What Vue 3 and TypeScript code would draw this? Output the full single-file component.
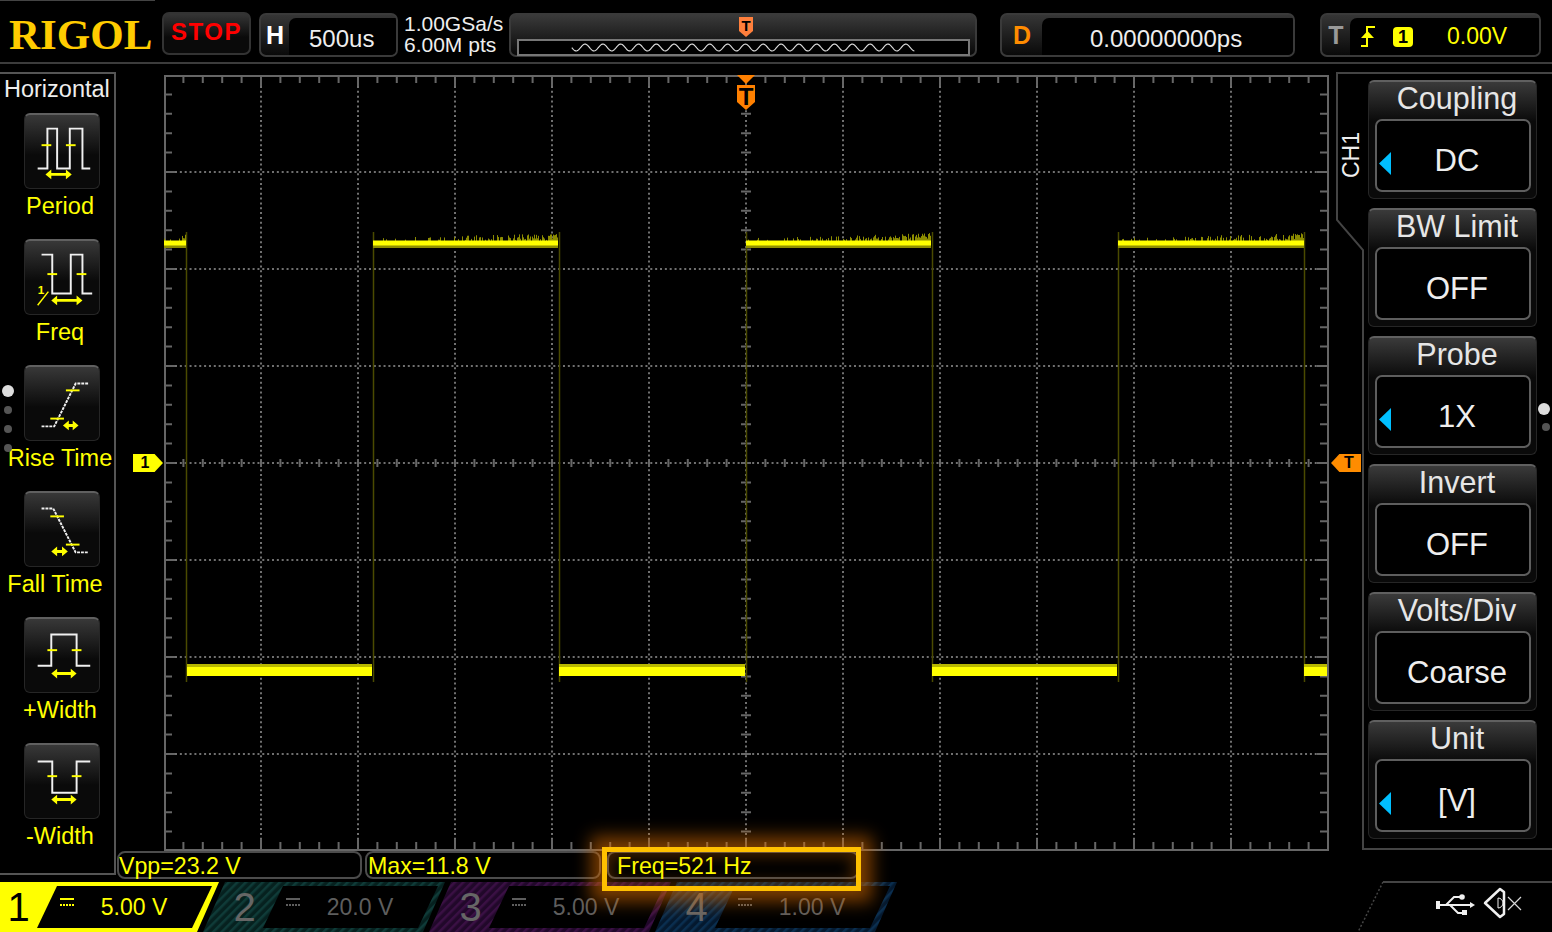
<script setup lang="ts">
interface MeasureIcon {
  label: string
  wave: string
  dotted?: boolean
  ticks: number[][]
  arrow: number[]
  half?: boolean
  shift?: boolean
}
interface SideButton {
  title: string
  value: string
  pointer: boolean
}
interface Channel {
  num: string
  value: string
  edge: string
  hatch: string
  ink: string
}

const icons: MeasureIcon[] = [
  { label: 'Period', wave: 'M13 55H23V14H33V55H46V14H59V55H67', ticks: [[17, 27, 31], [42, 52, 31]], arrow: [21, 48, 61] },
  { label: 'Freq', wave: 'M17 14H28V54H47V14H59V54H69', ticks: [[23, 33, 34], [53, 63, 34]], arrow: [27, 59, 61], half: true },
  { label: 'Rise Time', wave: 'M17 61H30L52 17H65', dotted: true, ticks: [[42, 56, 24], [26, 40, 53]], arrow: [39, 55, 60] },
  { label: 'Fall Time', wave: 'M17 16H29L52 61H65', dotted: true, ticks: [[26, 40, 24], [42, 56, 53]], arrow: [27, 44, 60], shift: true },
  { label: '+Width', wave: 'M13 48H27V16H53V48H67', ticks: [[23, 33, 32], [48, 58, 32]], arrow: [27, 53, 56] },
  { label: '-Width', wave: 'M13 17H28V49H53V17H67', ticks: [[23, 33, 32], [48, 58, 32]], arrow: [27, 53, 56] },
]

const sideButtons: SideButton[] = [
  { title: 'Coupling', value: 'DC', pointer: true },
  { title: 'BW Limit', value: 'OFF', pointer: false },
  { title: 'Probe', value: '1X', pointer: true },
  { title: 'Invert', value: 'OFF', pointer: false },
  { title: 'Volts/Div', value: 'Coarse', pointer: false },
  { title: 'Unit', value: '[V]', pointer: true },
]

const channels: Channel[] = [
  { num: '1', value: '5.00 V', edge: '#ffff00', hatch: '#ffff00', ink: '#ffff00' },
  { num: '2', value: '20.0 V', edge: '#06211f', hatch: '#0f3b38', ink: '#5e5e5e' },
  { num: '3', value: '5.00 V', edge: '#21082a', hatch: '#3a1044', ink: '#5e5e5e' },
  { num: '4', value: '1.00 V', edge: '#051a30', hatch: '#0b2f50', ink: '#5e5e5e' },
]

const measures = ['Vpp=23.2 V', 'Max=11.8 V', 'Freq=521 Hz']

const arrowPath = (a: number[]) => {
  const [x1, x2, y] = a
  return `M${x1} ${y}l6 -5v3.5H${x2 - 6}v-3.5l6 5l-6 5v-3.5H${x1 + 6}v3.5z`
}

// plot uses screen coordinates through its viewBox
const left = 164
const right = 1328
const top = 75
const bottom = 850
const pitch = 97
const step = pitch / 5
const midX = 746
const midY = 463

const columns = Array.from({ length: 13 }, (_, i) => left + pitch * i)
const rows = Array.from({ length: 9 }, (_, i) => top + pitch * i)

let tickPath = ''
for (let i = 1; i < 60; i++) {
  const x = left + step * i
  const len = i % 5 === 0 ? 11 : 8
  tickPath += `M${x} ${top}v${len}M${x} ${bottom}v${-len}`
  tickPath += `M${x} ${midY - 4}v8`
}
for (let i = 1; i < 40; i++) {
  const y = top + step * i
  const len = i % 5 === 0 ? 11 : 8
  tickPath += `M${left} ${y}h${len}M${right} ${y}h${-len}`
  tickPath += `M${midX - 5} ${y}h10`
}

const gridPath =
  columns.slice(1, -1).map((x) => `M${x} ${top + 11}V${bottom - 11}`).join('') +
  rows.slice(1, -1).map((y) => `M${left + 11} ${y}H${right - 11}`).join('')

const highs = [[164, 186], [373, 558], [746, 931], [1118, 1304]]
const lows = [[187, 372], [559, 745], [932, 1117], [1304, 1327]]
const edges = [186, 373, 559, 746, 932, 1118, 1304]

// fixed seed, so the trace noise is the same on every load
let seed = 4711
const rand = () => {
  seed = (seed * 16807) % 2147483647
  return seed / 2147483647
}
let noisePath = ''
for (const [a, b] of highs) {
  for (let x = a; x < b; x++) {
    const t = (x - a) / (b - a)
    if (rand() < 0.12 + t * t * 0.85) {
      noisePath += `M${x + 0.5} 241v${-(1 + rand() * (2 + t * 5))}`
    }
  }
}

const memWave = Array.from({ length: 449 }, (_, i) => {
  const x = 519 + i
  const y = 45.5 - 4.5 * Math.cos(((x - 746) / 23.3) * 2 * Math.PI)
  return `${x},${y.toFixed(1)}`
}).join(' ')
</script>

<template>
  <div class="scope">
    <header class="topbar">
      <div class="logo">RIGOL</div>
      <div class="stop">STOP</div>
      <div class="readout h-box">
        <span class="tag">H</span>
        <span class="value">500us</span>
      </div>
      <div class="rate">
        <span>1.00GSa/s</span>
        <span>6.00M pts</span>
      </div>
      <div class="memory">
        <svg class="mem-marker" viewBox="0 0 14 20">
          <polygon points="0,0 14,0 14,14 7,20 0,14" fill="#ff7f3c" />
          <text x="7" y="14" text-anchor="middle" class="mark-t small">T</text>
        </svg>
        <svg class="mem-wave" viewBox="517 37 453 17">
          <polyline :points="memWave" fill="none" stroke="#dcdcdc" stroke-width="1.5" />
        </svg>
      </div>
      <div class="readout d-box">
        <span class="tag orange">D</span>
        <span class="value">0.00000000ps</span>
      </div>
      <div class="readout t-box">
        <span class="tag grey">T</span>
        <div class="value trig">
          <svg class="edge" viewBox="0 0 16 21">
            <path d="M1 20H7V1H15" fill="none" stroke="#ffff00" stroke-width="2" />
            <polygon points="1,12 14,12 7.5,5" fill="#ffff00" />
          </svg>
          <span class="badge">1</span>
          <span class="level">0.00V</span>
        </div>
      </div>
    </header>

    <main class="body">
      <aside class="measure-panel">
        <div class="panel-title">Horizontal</div>
        <div v-for="icon in icons" :key="icon.label" class="measure-item">
          <div class="icon-btn">
            <svg viewBox="0 0 76 76">
              <path
                :d="icon.wave"
                fill="none"
                stroke="#f0f0f0"
                stroke-width="2"
                :stroke-dasharray="icon.dotted ? '3 1' : undefined"
              />
              <line
                v-for="(t, i) in icon.ticks"
                :key="i"
                :x1="t[0]"
                :x2="t[1]"
                :y1="t[2]"
                :y2="t[2]"
                stroke="#ffff00"
                stroke-width="2"
              />
              <path :d="arrowPath(icon.arrow)" fill="#ffff00" />
              <template v-if="icon.half">
                <text x="13" y="54" class="half">1</text>
                <line x1="13" y1="66" x2="24" y2="52" stroke="#ffff00" stroke-width="1.5" />
              </template>
            </svg>
          </div>
          <div class="measure-label" :class="{ shift: icon.shift }">{{ icon.label }}</div>
        </div>
        <i class="dot on" style="top: 311px"></i>
        <i class="dot" style="top: 332px"></i>
        <i class="dot" style="top: 351px"></i>
        <i class="dot" style="top: 370px"></i>
      </aside>

      <section class="center">
        <div class="plot">
          <svg viewBox="164 75 1165 776">
            <path :d="gridPath" stroke="#707070" stroke-width="2" stroke-dasharray="2 2.85" fill="none" />
            <path :d="tickPath" stroke="#666" stroke-width="2" fill="none" />
            <rect x="165" y="76" width="1163" height="774" fill="none" stroke="#666" stroke-width="2" />
            <path
              v-for="x in edges"
              :key="x"
              :d="`M${x + 0.5} 232V682`"
              stroke="#4a4a00"
              stroke-width="1.5"
            />
            <path :d="noisePath" stroke="#8c8c00" stroke-width="1" />
            <template v-for="seg in highs" :key="seg[0]">
              <rect :x="seg[0]" y="245" :width="seg[1] - seg[0]" height="3" fill="#8f8f00" />
              <rect :x="seg[0]" y="240.5" :width="seg[1] - seg[0]" height="5" fill="#ffff00" />
            </template>
            <template v-for="seg in lows" :key="seg[0]">
              <rect :x="seg[0]" y="664" :width="seg[1] - seg[0]" height="3" fill="#b8b800" />
              <rect :x="seg[0]" y="667" :width="seg[1] - seg[0]" height="9" fill="#ffff00" />
            </template>
            <polygon points="737,75 755,75 746,84" fill="#ff8000" />
            <polygon points="737,85 755,85 755,102 746,110 737,102" fill="#ff8000" />
            <text x="746" y="105" text-anchor="middle" class="mark-t">T</text>
          </svg>
          <div class="marker ch-marker">1</div>
          <div class="marker trig-marker">T</div>
        </div>
        <div class="measures">
          <div v-for="m in measures" :key="m" class="measure-box">{{ m }}</div>
        </div>
      </section>

      <aside class="side">
        <svg class="side-frame" viewBox="0 0 223 790">
          <path d="M223 1H8V148L34 178V777H223" fill="none" stroke="#444" stroke-width="2" />
        </svg>
        <div class="ch-name">CH1</div>
        <div v-for="b in sideButtons" :key="b.title" class="side-btn">
          <div class="side-title">{{ b.title }}</div>
          <div class="side-value">
            <i v-if="b.pointer" class="pointer"></i>
            {{ b.value }}
          </div>
        </div>
        <i class="dot on dot-r" style="top: 331px"></i>
        <i class="dot dot-r" style="top: 351px"></i>
      </aside>
    </main>

    <footer class="tabs">
      <div v-for="c in channels" :key="c.num" class="tab" :class="{ active: c.num === '1' }">
        <svg class="tab-bg" viewBox="0 0 242 51">
          <defs>
            <pattern :id="`hatch-${c.num}`" width="6" height="6" patternUnits="userSpaceOnUse" patternTransform="rotate(45)">
              <rect width="6" height="6" :fill="c.edge" />
              <rect width="2.5" height="6" :fill="c.hatch" />
            </pattern>
          </defs>
          <polygon points="22,1 242,1 220,51 0,51" :fill="`url(#hatch-${c.num})`" />
          <polygon points="80,5 235,5 215,47 60,47" fill="#000" />
        </svg>
        <span class="tab-num">{{ c.num }}</span>
        <svg class="coupling" viewBox="0 0 14 9">
          <line x1="0" x2="14" y1="1" y2="1" :stroke="c.ink" stroke-width="2" />
          <line x1="0" x2="14" y1="7" y2="7" :stroke="c.ink" stroke-width="2" stroke-dasharray="2 1" />
        </svg>
        <span class="tab-val" :style="{ color: c.ink }">{{ c.value }}</span>
      </div>
      <svg class="status" viewBox="1358 881 194 51">
        <path d="M1552 882H1383" stroke="#444" stroke-width="2" fill="none" />
        <path d="M1383 882L1358 932" stroke="#444" stroke-width="1.5" stroke-dasharray="2 2" fill="none" />
        <g fill="none" stroke="#f0f0f0" stroke-width="2">
          <path d="M1438 905H1472" />
          <path d="M1446 905L1454 897H1462" />
          <path d="M1450 905L1458 913H1464" />
        </g>
        <g fill="#f0f0f0">
          <rect x="1436" y="901" width="4" height="8" />
          <circle cx="1462" cy="897" r="2.8" />
          <rect x="1462" y="910" width="5" height="5" />
          <polygon points="1470,902 1475,905 1470,908" />
        </g>
        <path d="M1485 903L1500 889L1504 892V914L1500 917Z" fill="none" stroke="#f0f0f0" stroke-width="2.5" stroke-linejoin="round" />
        <path d="M1498 898A5 5 0 0 1 1498 908V898" fill="none" stroke="#f0f0f0" stroke-width="1" />
        <path d="M1508 897L1521 910M1521 897L1508 910" stroke="#d8d8d8" stroke-width="1.2" />
      </svg>
    </footer>

    <div class="highlight"></div>
  </div>
</template>

<style scoped>
.scope {
  position: relative;
  width: 1552px;
  height: 932px;
  overflow: hidden;
  background: #000;
  font-family: "Liberation Sans", Arial, sans-serif;
  display: flex;
  flex-direction: column;
}
.scope::before {
  content: '';
  position: absolute;
  left: 0;
  top: 0;
  width: 155px;
  height: 1px;
  background: #444;
}

/* top bar */
.topbar {
  height: 62px;
  flex: none;
  border-bottom: 2px solid #3c3c3c;
  box-sizing: content-box;
  display: flex;
  align-items: flex-start;
  padding-left: 9px;
}
.logo {
  width: 144px;
  margin-top: 12px;
  font-family: "Liberation Serif", serif;
  font-weight: bold;
  font-size: 43px;
  line-height: 46px;
  color: #ffcc00;
}
.stop {
  width: 89px;
  height: 43px;
  box-sizing: border-box;
  margin: 12px 0 0 9px;
  border: 2px solid #333;
  border-radius: 7px;
  background: linear-gradient(#353535, #0a0a0a 60%);
  color: #f00;
  font-weight: bold;
  font-size: 24px;
  letter-spacing: 1.5px;
  line-height: 36px;
  text-align: center;
}
.readout {
  height: 44px;
  box-sizing: border-box;
  margin-top: 13px;
  border: 2px solid #3a3a3a;
  border-radius: 7px;
  background: linear-gradient(#353535, #0a0a0a);
  display: flex;
  overflow: hidden;
  color: #eee;
}
.tag {
  width: 28px;
  flex: none;
  text-align: center;
  font-weight: bold;
  font-size: 25px;
  line-height: 40px;
  color: #fff;
}
.tag.orange {
  color: #ff8c00;
}
.tag.grey {
  color: #999;
}
.value {
  flex: 1;
  margin-top: 3px;
  background: #000;
  border-top-left-radius: 7px;
  font-size: 24px;
  line-height: 41px;
}
.h-box {
  width: 139px;
  margin-left: 8px;
}
.h-box .value {
  padding-left: 20px;
}
.rate {
  width: 105px;
  margin: 13px 0 0 6px;
  display: flex;
  flex-direction: column;
  font-size: 21px;
  line-height: 21px;
  color: #eee;
}
.memory {
  position: relative;
  width: 468px;
  height: 44px;
  box-sizing: border-box;
  margin-top: 13px;
  padding: 24px 6px 0;
  border: 2px solid #3a3a3a;
  border-radius: 7px;
  background: linear-gradient(#3a3a3a, #080808);
}
.mem-marker {
  position: absolute;
  left: 228px;
  top: 2px;
  width: 14px;
  height: 20px;
}
.mem-wave {
  display: block;
  width: 453px;
  height: 17px;
  box-sizing: border-box;
  border: 2px solid #777;
  background: #000;
}
.d-box {
  width: 295px;
  margin-left: 23px;
}
.d-box .tag {
  width: 40px;
}
.d-box .value {
  padding-left: 48px;
}
.t-box {
  width: 221px;
  margin-left: 25px;
}
.trig {
  display: flex;
  align-items: center;
  padding-left: 10px;
  color: #ff0;
}
.edge {
  width: 16px;
  height: 21px;
}
.badge {
  width: 20px;
  height: 20px;
  margin-left: 17px;
  border-radius: 4px;
  background: #ff0;
  color: #000;
  font-size: 18px;
  font-weight: bold;
  line-height: 20px;
  text-align: center;
}
.level {
  margin-left: 34px;
  font-size: 23px;
}
.mark-t {
  font-family: "Liberation Sans", Arial, sans-serif;
  font-weight: bold;
  font-size: 24px;
  fill: #000;
}
.mark-t.small {
  font-size: 15px;
}

/* main row */
.body {
  flex: none;
  height: 809px;
  margin-top: 8px;
  display: flex;
}
.measure-panel {
  position: relative;
  width: 116px;
  height: 803px;
  box-sizing: border-box;
  flex: none;
  border-top: 2px solid #555;
  border-right: 2px solid #555;
  border-bottom: 2px solid #555;
}
.panel-title {
  height: 39px;
  padding-left: 4px;
  font-size: 23.5px;
  line-height: 30px;
  color: #eee;
}
.measure-item {
  width: 120px;
  height: 126px;
  display: flex;
  flex-direction: column;
  align-items: center;
}
.icon-btn {
  width: 76px;
  height: 76px;
  flex: none;
  margin-left: 4px;
  box-sizing: border-box;
  border: 1px solid #262626;
  border-top: 2px solid #606060;
  border-radius: 6px;
  background: linear-gradient(#383838, #0a0a0a 55%);
}
.icon-btn svg {
  display: block;
  width: 74px;
  height: 74px;
  overflow: visible;
}
.half {
  font-family: "Liberation Sans", Arial, sans-serif;
  font-size: 12px;
  font-weight: bold;
  fill: #ff0;
}
.measure-label {
  font-size: 23.5px;
  line-height: 34px;
  color: #ff0;
  white-space: nowrap;
}
.measure-label.shift {
  margin-right: 10px;
}
.dot {
  position: absolute;
  left: 4px;
  width: 8px;
  height: 8px;
  border-radius: 50%;
  background: #555;
}
.dot.on {
  left: 2px;
  width: 12px;
  height: 12px;
  background: #ddd;
}
.dot-r,
.dot.on.dot-r {
  left: auto;
  right: 2px;
}

.center {
  width: 1213px;
  flex: none;
  display: flex;
  flex-direction: column;
}
.plot {
  position: relative;
  height: 776px;
  margin: 3px 0 0 48px;
  width: 1165px;
}
.plot svg {
  display: block;
  width: 1165px;
  height: 776px;
}
.marker {
  position: absolute;
  top: 379px;
  height: 18px;
  width: 30px;
  font-size: 16px;
  font-weight: bold;
  line-height: 18px;
  color: #000;
  text-align: center;
}
.ch-marker {
  left: -31px;
  background: #ff0;
  clip-path: polygon(0 0, 72% 0, 100% 50%, 72% 100%, 0 100%);
  padding-right: 6px;
  box-sizing: border-box;
}
.trig-marker {
  left: 1167px;
  background: #ff8c00;
  clip-path: polygon(28% 0, 100% 0, 100% 100%, 28% 100%, 0 50%);
  padding-left: 6px;
  box-sizing: border-box;
}
.measures {
  display: flex;
  height: 28px;
  margin-left: 1px;
}
.measure-box {
  height: 28px;
  box-sizing: border-box;
  border: 2px solid #4c4c4c;
  border-radius: 8px;
  font-size: 23.2px;
  line-height: 27px;
  color: #ff0;
  white-space: nowrap;
}
.measure-box:nth-child(1) {
  width: 245px;
  padding-left: 0;
}
.measure-box:nth-child(2) {
  width: 236px;
  margin-left: 3px;
  padding-left: 1px;
}
.measure-box:nth-child(3) {
  width: 252px;
  margin-left: 6px;
  padding-left: 8px;
}

/* softkeys */
.side {
  position: relative;
  width: 223px;
  flex: none;
  box-sizing: border-box;
  padding: 8px 0 0 39px;
  display: flex;
  flex-direction: column;
  gap: 9px;
}
.side-frame {
  position: absolute;
  left: 0;
  top: 0;
  width: 223px;
  height: 790px;
}
.ch-name {
  position: absolute;
  left: 10px;
  top: 60px;
  height: 46px;
  writing-mode: vertical-rl;
  transform: rotate(180deg);
  font-size: 23px;
  line-height: 24px;
  color: #eee;
}
.side-btn {
  position: relative;
  width: 169px;
  height: 119px;
  flex: none;
  box-sizing: border-box;
  padding: 0 5px 0 6px;
  border: 1px solid #262626;
  border-top: 2px solid #606060;
  border-radius: 6px;
  background: linear-gradient(#3a3a3a, #0a0a0a 34%);
}
.side-title {
  height: 37px;
  padding-left: 8px;
  font-size: 30.5px;
  line-height: 33px;
  color: #e6e6e6;
  text-align: center;
  white-space: nowrap;
}
.side-value {
  position: relative;
  height: 73px;
  box-sizing: border-box;
  padding-left: 8px;
  border: 2px solid #5e5e5e;
  border-radius: 7px;
  background: #000;
  font-size: 31px;
  line-height: 80px;
  color: #eee;
  text-align: center;
}
.pointer {
  position: absolute;
  left: 2px;
  top: 31px;
  width: 12px;
  height: 23px;
  background: #00bfff;
  clip-path: polygon(100% 0, 100% 100%, 0 50%);
}

/* channel tabs */
.tabs {
  flex: 1;
  display: flex;
  margin-left: -23px;
  position: relative;
}
.tab {
  position: relative;
  width: 242px;
  height: 51px;
  flex: none;
  margin-right: -16px;
  display: grid;
  grid-template-columns: 83px 19px 110px;
  align-items: center;
}
.tab-bg {
  position: absolute;
  inset: 0;
  width: 242px;
  height: 51px;
}
.tab-num {
  position: relative;
  text-align: center;
  font-size: 40px;
  line-height: 51px;
  color: #666;
}
.tab.active .tab-num {
  color: #000;
}
.coupling {
  position: relative;
  align-self: start;
  width: 14px;
  height: 9px;
  margin-top: 17px;
}
.tab-val {
  position: relative;
  text-align: center;
  font-size: 23px;
  line-height: 53px;
}
.status {
  position: absolute;
  right: 0;
  top: 0;
  width: 194px;
  height: 51px;
}

.highlight {
  position: absolute;
  left: 602px;
  top: 847px;
  width: 259px;
  height: 44px;
  box-sizing: border-box;
  border: 5px solid #ffc000;
  box-shadow: 0 0 16px 11px rgba(220, 110, 0, 0.55), inset 0 0 14px 5px rgba(220, 110, 0, 0.3);
  pointer-events: none;
}
</style>
